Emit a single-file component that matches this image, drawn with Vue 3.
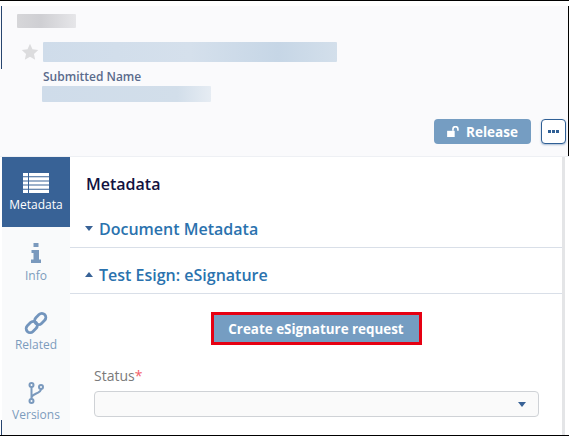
<script setup>
const tabs = [
  { key: 'info', label: 'Info' },
  { key: 'related', label: 'Related' },
  { key: 'versions', label: 'Versions' }
]
</script>

<template>
  <div class="frame">
    <header class="head">
      <div class="blur crumb"></div>
      <div class="title-row">
        <svg class="star" viewBox="0 0 24 24" width="18" height="18"><path fill="#dcdcde" d="M12 1l3.300 7.300 7.700.9-5.700 5.300 1.600 7.800L12 18.400l-6.900 3.900 1.600-7.800L1 9.200l7.700-.9z"/></svg>
        <div class="blur title"></div>
      </div>
      <div class="sub">
        <div class="sub-label">Submitted Name</div>
        <div class="blur subname"></div>
      </div>
      <div class="actions">
        <button class="release">
          <svg viewBox="0 0 20 16" width="14" height="11"><path fill="#fff" d="M0 7h11v9H0z"/><path fill="none" stroke="#fff" stroke-width="2.400" d="M8.500 7V4.500a3.600 3.600 0 0 1 7.200 0V7"/></svg>
          Release
        </button>
        <button class="more"><span></span><span></span><span></span></button>
      </div>
    </header>
    <div class="body">
      <nav class="side">
        <div class="tab active">
          <svg viewBox="0 0 26 20" width="26" height="20"><path fill="#fff" d="M0 0h5v3.200H0zM6 0h20v3.200H6zM0 4.200h5v3.200H0zM6 4.200h20v3.200H6zM0 8.400h5v3.200H0zM6 8.400h20v3.200H6zM0 12.600h5v3.200H0zM6 12.600h20v3.200H6zM0 16.800h5V20H0zM6 16.800h20V20H6z"/></svg>
          <span>Metadata</span>
        </div>
        <div v-for="t in tabs" :key="t.key" class="tab" :class="t.key">
          <svg v-if="t.key === 'info'" viewBox="0 0 12 20" width="12" height="20"><path fill="#7a99bd" d="M3.500 0h5v4h-5zM1.500 7h7.500v9.500H11V20H1v-3.500h2.500V10H1.500z"/></svg>
          <svg v-else-if="t.key === 'related'" viewBox="0 0 24 24" width="24" height="24"><g fill="none" stroke="#7395bd" stroke-width="2.800"><rect x="1.500" y="12" width="12.500" height="8" rx="4" transform="rotate(-45 7.750 16)"/><rect x="10" y="4" width="12.500" height="8" rx="4" transform="rotate(-45 16.250 8)"/></g></svg>
          <svg v-else viewBox="0 0 16 22" width="16" height="22"><g fill="none" stroke="#7a99bd" stroke-width="2"><circle cx="3.500" cy="3" r="2"/><circle cx="13" cy="5" r="2"/><circle cx="3.500" cy="19" r="2"/><path d="M3.500 5v12M13 7c0 5-9.500 4-9.500 9"/></g></svg>
          <span>{{ t.label }}</span>
        </div>
      </nav>
      <main class="main">
        <h2>Metadata</h2>
        <div class="section first"><i class="tri down"></i>Document Metadata</div>
        <div class="section"><i class="tri up"></i>Test Esign: eSignature</div>
        <div class="cta">
          <button class="create">Create eSignature request</button>
        </div>
        <label class="field-label">Status<em>*</em></label>
        <div class="select"><i class="tri down small"></i></div>
      </main>
      <div class="gutter"></div>
    </div>
  </div>
</template>

<style>
html, body { margin: 0; background: #fff; }
</style>

<style scoped>
.frame {
  width: 569px;
  height: 436px;
  box-sizing: border-box;
  border-top: 1px solid #000;
  border-bottom: 1px solid #000;
  background: #fff;
  overflow: hidden;
  font-family: "Open Sans", "Noto Sans", sans-serif;
}
.head {
  box-sizing: border-box;
  padding: 8px 2px 0 17px;
  margin-top: 5px;
  margin-bottom: -5px;
  height: 150px;
  display: flex;
  flex-direction: column;
  background: #fafafc;
  border-right: 1px solid #000;
  position: relative;
}
.head::before {
  content: "";
  position: absolute;
  left: 1px;
  top: 0;
  width: 1px;
  height: 63px;
  background: #27456f;
}
.blur { border-radius: 1px; }
.crumb { width: 59px; height: 14px; background: linear-gradient(90deg, #d6d6d9, #cfcfd3 40%, #e6e6e9); }
.title-row { display: flex; align-items: center; gap: 4px; margin: 14px 0 0 4px; }
.title { width: 294px; height: 20px; background: linear-gradient(90deg, #cfdcea, #d5e0ec 50%, #c6d6e6 80%, #d3dfeb); }
.sub { margin: 7px 0 0 26px; }
.sub-label { font-size: 12px; font-weight: 600; line-height: 16px; color: #5b6b8c; }
.subname { width: 169px; height: 16px; margin: 1px 0 0 -1px; background: linear-gradient(90deg, #cfdcea, #d2deea 80%, #e6ecf3); }
.actions { display: flex; justify-content: flex-end; align-items: center; gap: 10px; margin-top: 17px; }
.release {
  width: 97px; height: 25px; border: 0; border-radius: 4px; background: #759dc2;
  color: #fff; font: 700 13.500px "Open Sans", sans-serif; display: flex; align-items: center; justify-content: center; gap: 5px; padding: 0;
}
.more {
  width: 25px; height: 25px; box-sizing: border-box; border: 1px solid #2f5f95; border-radius: 4px; background: #fff;
  display: flex; align-items: center; justify-content: center; gap: 1px; padding: 0; box-shadow: 0 1px 2px rgba(47,95,149,.4);
}
.more span { width: 3px; height: 3px; background: #2f5f95; }
.body { display: flex; height: 279px; padding-left: 2px; border-top: 1px solid #eef0f4; margin-top: 5px; position: relative; }
.body::before {
  content: "";
  position: absolute;
  left: 1px;
  bottom: 0;
  width: 1px;
  height: 16px;
  background: #27456f;
}
.side { width: 68px; display: flex; flex-direction: column; flex: none; background: #f9fafb; }
.tab { height: 70px; display: flex; flex-direction: column; align-items: center; justify-content: flex-end; padding-bottom: 14px; box-sizing: border-box; font-size: 12px; line-height: 15px; color: #7d9cbd; }
.tab.active { background: #386296; color: #fff; padding-bottom: 15px; gap: 4px; }
.tab.info { gap: 5px; }
.tab.related { gap: 2px; }
.tab.versions { gap: 3px; }
.main { flex: 1; background: #fff; min-width: 0; padding: 0; }
.gutter { width: 3px; margin-right: 4px; background: #e4e5e7; flex: none; }
h2 { margin: 0; padding: 17px 0 0 16px; font-size: 16px; line-height: 20px; font-weight: 600; color: #12123f; }
.section {
  margin-top: 0; padding: 8px 0 0 15px; height: 46px; box-sizing: border-box; border-bottom: 1px solid #d9dfe8;
  font-size: 16px; font-weight: 600; color: #2a72ae; display: flex; align-items: center; gap: 6px;
}
.section.first { margin-top: 8px; }
.tri { width: 0; height: 0; border-left: 4.500px solid transparent; border-right: 4.500px solid transparent; display: block; }
.tri.down { border-top: 5px solid #386296; }
.tri.up { border-bottom: 5px solid #386296; }
.tri.small { margin-left: auto; }
.cta { display: flex; justify-content: center; padding-top: 18px; }
.create {
  width: 211px; height: 33px; box-sizing: border-box; border: 3px solid #e60012; background: #759dc2; color: #fff;
  font: 700 13.400px "Open Sans", sans-serif; padding: 0;
}
.field-label { display: block; margin: 21px 0 0 24px; font-size: 14px; line-height: 20px; color: #7a7a7a; }
.field-label em { color: #f4606a; font-style: normal; }
.select {
  margin: 5px 23px 0 24px; height: 26px; box-sizing: border-box; border: 1px solid #cfd2d6; border-radius: 4px; background: #fafafa;
  display: flex; align-items: center; padding-right: 12px;
}
</style>
